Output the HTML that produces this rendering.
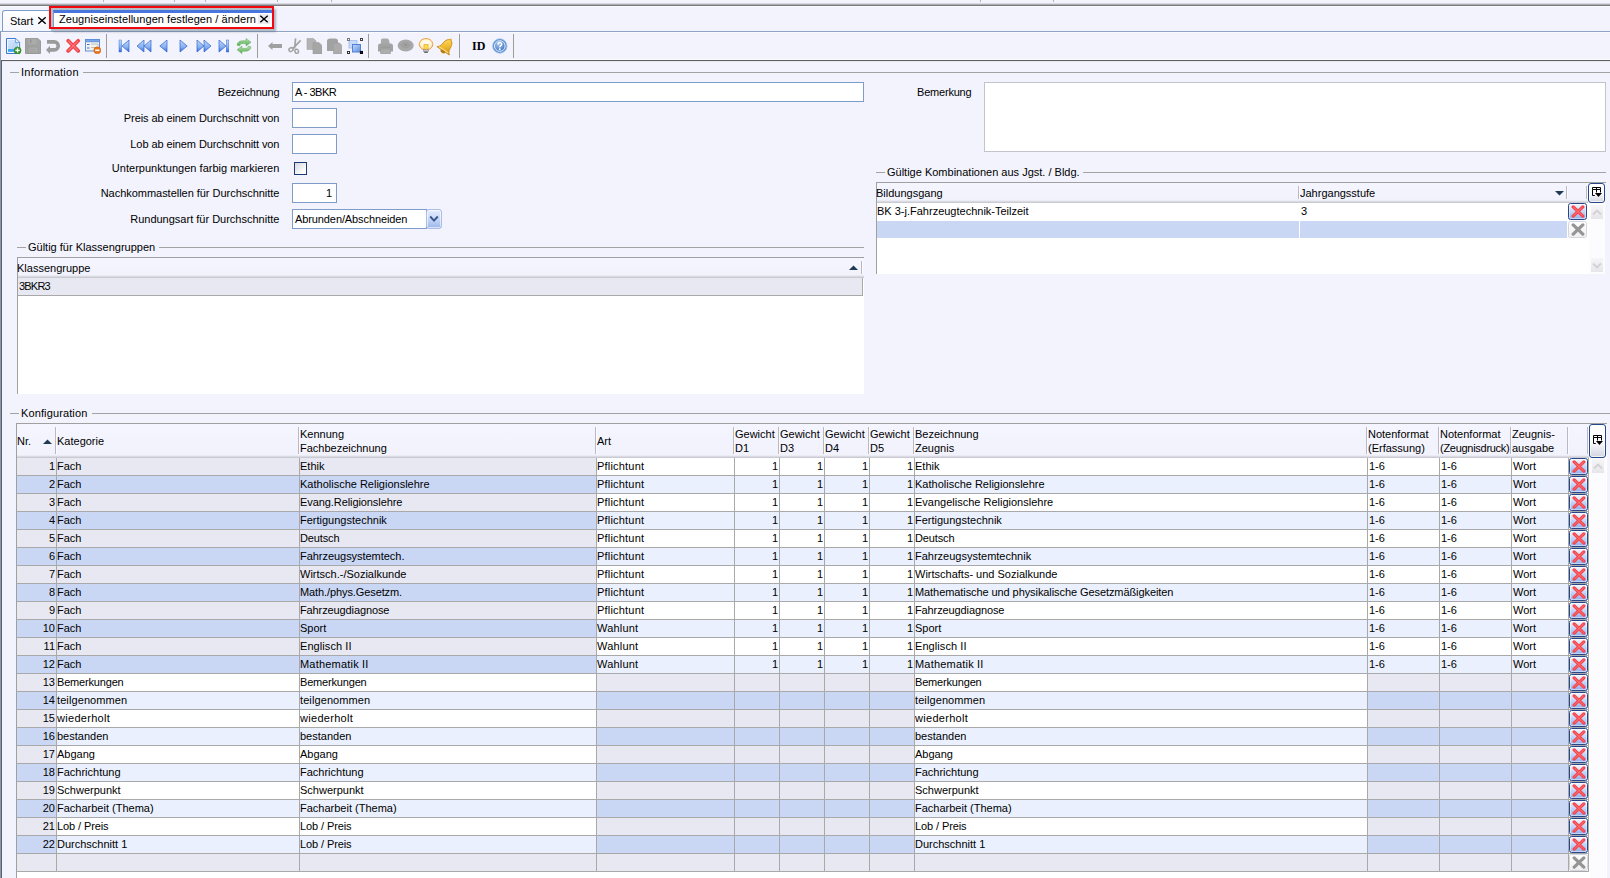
<!DOCTYPE html>
<html lang="de"><head><meta charset="utf-8"><title>Zeugniseinstellungen festlegen / ändern</title>
<style>
*{box-sizing:border-box;margin:0;padding:0}
html,body{width:1610px;height:878px;overflow:hidden;background:#f2f3fd}
body{position:relative;font:11px "Liberation Sans",sans-serif;color:#000;}
.a{position:absolute;white-space:nowrap}
.t{position:absolute;white-space:nowrap;line-height:13px;height:13px}
.r{text-align:right}
.inp{position:absolute;background:#fff;border:1px solid #7f9bc8;height:20px}
.gl{position:absolute;height:1px;background:#a3a3a3}
.cell{position:absolute;height:17px;line-height:17px;white-space:nowrap;overflow:hidden}
.num{text-align:right;padding-right:1px}
.hl{position:absolute;background:#a9a9a9;height:1px}
.vl{position:absolute;background:#a9a9a9;width:1px}
.hs{position:absolute;width:2px;background:linear-gradient(90deg,#b9b9c1 50%,#fbfbff 50%)}
.db{position:absolute;width:19px;height:17px;border:1px solid #27478a;border-radius:2.5px;background:linear-gradient(#f4f7fe 0%,#cfdcf8 40%,#8fb0ee 100%);box-shadow:inset 0 0 0 1px rgba(255,255,255,.45)}
.db.g{border-color:#d4d4dc;background:linear-gradient(#ffffff,#efeff1);box-shadow:none}
.hd{position:absolute;white-space:nowrap;line-height:14px}
.sep{position:absolute;width:1px;background:#9c9c9c;top:34px;height:24px}
.ghead{position:absolute;background:linear-gradient(#f5f5ff,#f2f2fc)}
.gsh{position:absolute;height:3px;background:linear-gradient(#ebebf4 0 33.4%,#dadae3 33.4% 66.7%,#cacad3 66.7%)}
</style></head><body>

<div class="a" style="left:0;top:3px;width:1610px;height:4px;background:linear-gradient(#dad8e6 0 25%,#aeaeb2 25% 50%,#7a7a7a 50% 75%,#fafaff 75%)"></div>
<div class="a" style="left:103px;top:0;width:1px;height:2px;background:#b5b5b5"></div>
<div class="a" style="left:174px;top:0;width:1px;height:2px;background:#b5b5b5"></div>
<div class="a" style="left:205px;top:0;width:1px;height:2px;background:#b5b5b5"></div>
<div class="a" style="left:277px;top:0;width:1px;height:2px;background:#b5b5b5"></div>
<div class="a" style="left:331px;top:0;width:1px;height:2px;background:#b5b5b5"></div>
<div class="a" style="left:980px;top:0;width:1px;height:2px;background:#b5b5b5"></div>
<div class="a" style="left:1053px;top:0;width:1px;height:2px;background:#b5b5b5"></div>
<div class="a" style="left:2px;top:10px;width:50px;height:22px;border:1px solid #7f9bc8;border-bottom:none;border-radius:3px 3px 0 0;background:linear-gradient(#ffffff,#f4f5fe)"></div>
<div class="t" style="left:10px;top:15px">Start</div>
<svg class="a" style="left:37px;top:16px" width="10" height="9" viewBox="0 0 10 9"><path d="M1.3 1.2L8.7 7.8M8.7 1.2L1.3 7.8" stroke="#000" stroke-width="1.45"/></svg>
<div class="a" style="left:0;top:31px;width:1610px;height:1px;background:#8da3c8"></div>
<div class="a" style="left:0;top:32px;width:1610px;height:1px;background:#fbfbff"></div>
<div class="a" style="left:51px;top:8px;width:223px;height:23px;background:#b4bfc6;box-shadow:2px 1px 2px rgba(90,100,120,.45)"></div>
<div class="a" style="left:53px;top:10px;width:219px;height:19px;background:#fff;border-top:3px solid #4876de;border-left:1px solid #7f9bd4"></div>
<div class="t" style="left:59px;top:13px;letter-spacing:0.05px">Zeugniseinstellungen festlegen / ändern</div>
<div class="a" style="left:258px;top:14px;width:12px;height:10px;background:#ececf2"></div>
<svg class="a" style="left:259px;top:15px" width="10" height="8" viewBox="0 0 10 8"><path d="M1.3 0.8L8.7 7.2M8.7 0.8L1.3 7.2" stroke="#000" stroke-width="1.45"/></svg>
<div class="a" style="left:49px;top:6px;width:225px;height:23px;border:2px solid #f0070f"></div>
<div class="a" style="left:0;top:32px;width:1px;height:846px;background:#8797b8"></div>
<div class="a" style="left:1px;top:60px;width:1px;height:818px;background:#5f5f5f"></div>
<div class="a" style="left:1px;top:60px;width:1609px;height:1px;background:#5f5f5f"></div>
<div class="a" style="left:2px;top:61px;width:1608px;height:1px;background:#e6e6f0"></div>
<div class="a" style="left:1px;top:59px;width:1609px;height:1px;background:#fbfbff"></div>
<div class="sep" style="left:106px"></div>
<div class="sep" style="left:257px"></div>
<div class="sep" style="left:368px"></div>
<div class="sep" style="left:459px"></div>
<div class="sep" style="left:513px"></div>
<svg width="0" height="0" style="position:absolute"><defs>
<linearGradient id="gB" x1="0" y1="0" x2="0" y2="1"><stop offset="0" stop-color="#c3daf9"/><stop offset="0.6" stop-color="#86b0ee"/><stop offset="1" stop-color="#2f66da"/></linearGradient>
<linearGradient id="gP" x1="0" y1="0" x2="1" y2="1"><stop offset="0" stop-color="#dbe9fb"/><stop offset="1" stop-color="#a6caf3"/></linearGradient>
<linearGradient id="gG" x1="0" y1="0" x2="0" y2="1"><stop offset="0" stop-color="#b9e3b2"/><stop offset="1" stop-color="#55ab4d"/></linearGradient>
<linearGradient id="gY" x1="0" y1="0" x2="0" y2="1"><stop offset="0" stop-color="#fffbe6"/><stop offset="1" stop-color="#fbe093"/></linearGradient>
<linearGradient id="gO" x1="0" y1="0" x2="1" y2="1"><stop offset="0" stop-color="#fde58a"/><stop offset="0.5" stop-color="#f3bf33"/><stop offset="1" stop-color="#cf8d10"/></linearGradient>
<radialGradient id="gYr" cx="0.5" cy="0.45" r="0.6"><stop offset="0" stop-color="#ffffff"/><stop offset="0.6" stop-color="#fff6d8"/><stop offset="1" stop-color="#fbd78a"/></radialGradient>
<radialGradient id="gH" cx="0.4" cy="0.35" r="0.7"><stop offset="0" stop-color="#a8c6ee"/><stop offset="1" stop-color="#3b73c4"/></radialGradient>
<linearGradient id="gS" x1="0" y1="0" x2="1" y2="1"><stop offset="0" stop-color="#c5d8f8"/><stop offset="1" stop-color="#5f8fe0"/></linearGradient>
</defs></svg>
<svg class="a" style="left:6px;top:38px" width="16" height="16" viewBox="0 0 16 16" ><path d="M0.5 0.5H9.8L13.6 4.3V15.5H0.5Z" fill="url(#gP)" stroke="#3f7ad2"/><path d="M1.5 1.5H9.3L12.6 4.8V14.5H1.5Z" fill="none" stroke="#f4f9ff" stroke-width="0.9"/><path d="M9.6 0.8V4.6H13.3" fill="#eef5fe" stroke="#5a90dc" stroke-width="0.8"/><rect x="2" y="11" width="7" height="2.8" fill="#3fa6f0"/><circle cx="11.6" cy="12.4" r="3.5" fill="#3f9a2f" stroke="#2f7a20" stroke-width="0.5"/><path d="M9.4 12.4H13.8M11.6 10.2V14.6" stroke="#fff" stroke-width="1.3"/></svg>
<svg class="a" style="left:25px;top:38px" width="16" height="16" viewBox="0 0 16 16" ><path d="M0.5 0.5H13L15.5 3V15.5H0.5Z" fill="#a3a3a3" stroke="#9a9a9a"/><rect x="3.5" y="0.8" width="8" height="5.2" fill="#ababab"/><rect x="5.2" y="1.6" width="1.2" height="3" fill="#8c8c8c"/><rect x="3" y="9" width="10" height="6" fill="#b0b0b0" stroke="#959595" stroke-width="0.7"/><path d="M4.5 11.3H11.5M4.5 13.2H11.5" stroke="#9a9a9a" stroke-width="0.8"/></svg>
<svg class="a" style="left:46px;top:38px" width="16" height="16" viewBox="0 0 16 16" ><path d="M1 3.9H8.25A4 4 0 0 1 8.25 11.9H3.5" fill="none" stroke="#9b9b9b" stroke-width="3.6"/><path d="M0 12L4 7.8V16Z" fill="#9b9b9b"/></svg>
<svg class="a" style="left:66px;top:38px" width="16" height="16" viewBox="0 0 16 16" ><path d="M2.2 2.7L12.2 12.9M12.2 2.7L2.2 12.9" stroke="#f0454b" stroke-width="3.7" stroke-linecap="round"/><path d="M2.6 3.1L11.8 12.5M11.8 3.1L2.6 12.5" stroke="#fa7276" stroke-width="1.3" stroke-linecap="round"/></svg>
<svg class="a" style="left:85px;top:38px" width="16" height="16" viewBox="0 0 16 16" ><rect x="0.5" y="1.5" width="14" height="11.5" fill="#f3f3ee" stroke="#5f8fdc"/><rect x="0.5" y="1.5" width="14" height="2.2" fill="#7aa6ea" stroke="#5f8fdc"/><path d="M2 6.5H4.5M2 10H4.5" stroke="#3f6fd0" stroke-width="1.2"/><path d="M6 6H13V8M6 9.5H13" stroke="#b9b9b4" stroke-width="0.9" fill="none"/><circle cx="12.3" cy="12.3" r="3.5" fill="#e8761a" stroke="#c85a0a" stroke-width="0.5"/><rect x="10.2" y="11.5" width="4.2" height="1.6" fill="#fff"/></svg>
<svg class="a" style="left:116px;top:38px" width="16" height="16" viewBox="0 0 16 16" ><rect x="3" y="2" width="2.6" height="12" fill="url(#gB)" stroke="#2a62cf" stroke-width="0.4"/><path d="M13 2V14L6 8Z" fill="url(#gB)" stroke="#2f63d2" stroke-width="0.7"/></svg>
<svg class="a" style="left:136px;top:38px" width="16" height="16" viewBox="0 0 16 16" ><path d="M8 2V14L1 8Z" fill="url(#gB)" stroke="#2f63d2" stroke-width="0.7"/><path d="M15 2V14L8 8Z" fill="url(#gB)" stroke="#2f63d2" stroke-width="0.7"/></svg>
<svg class="a" style="left:156px;top:38px" width="16" height="16" viewBox="0 0 16 16" ><path d="M11 2V14L3.8 8Z" fill="url(#gB)" stroke="#2f63d2" stroke-width="0.7"/></svg>
<svg class="a" style="left:176px;top:38px" width="16" height="16" viewBox="0 0 16 16" ><path d="M4 2V14L11.2 8Z" fill="url(#gB)" stroke="#2f63d2" stroke-width="0.7"/></svg>
<svg class="a" style="left:196px;top:38px" width="16" height="16" viewBox="0 0 16 16" ><path d="M1 2V14L8 8Z" fill="url(#gB)" stroke="#2f63d2" stroke-width="0.7"/><path d="M8 2V14L15 8Z" fill="url(#gB)" stroke="#2f63d2" stroke-width="0.7"/></svg>
<svg class="a" style="left:216px;top:38px" width="16" height="16" viewBox="0 0 16 16" ><rect x="10.2" y="2" width="2.6" height="12" fill="url(#gB)" stroke="#2a62cf" stroke-width="0.4"/><path d="M3 2V14L10 8Z" fill="url(#gB)" stroke="#2f63d2" stroke-width="0.7"/></svg>
<svg class="a" style="left:236px;top:38px" width="16" height="16" viewBox="0 0 16 16" ><path d="M1 7.2C1.3 4 4 2.6 7 2.8H10V0.4L15 4.2L10 8V5.6H7C5 5.5 4 6.2 3.8 7.8Z" fill="url(#gG)" stroke="#5aa854" stroke-width="0.5"/><path d="M15 8.8C14.7 12 12 13.4 9 13.2H6V15.6L1 11.8L6 8V10.4H9C11 10.5 12 9.8 12.2 8.2Z" fill="url(#gG)" stroke="#5aa854" stroke-width="0.5"/></svg>
<svg class="a" style="left:266px;top:38px" width="16" height="16" viewBox="0 0 16 16" ><path d="M2 8L6.5 4V6H16V10H6.5V12Z" fill="#a0a0a0"/></svg>
<svg class="a" style="left:286px;top:38px" width="16" height="16" viewBox="0 0 16 16" ><path d="M9.6 0.3L8.6 10.5M14.6 2.3L6.6 10.8" stroke="#a3a3a3" stroke-width="1.7" fill="none"/><ellipse cx="5" cy="11.6" rx="2.2" ry="1.7" transform="rotate(-35 5 11.6)" fill="none" stroke="#a3a3a3" stroke-width="1.5"/><ellipse cx="10.7" cy="13.3" rx="1.7" ry="2.1" transform="rotate(-20 10.7 13.3)" fill="none" stroke="#a3a3a3" stroke-width="1.5"/></svg>
<svg class="a" style="left:306px;top:38px" width="16" height="16" viewBox="0 0 16 16" ><path d="M1 0.5H7.5L10 3V11.5H1Z" fill="#b2b2b2" stroke="#a4a4a4" stroke-width="0.6"/><path d="M7 4.5H13L16 7.5V16H7Z" fill="#a6a6a6" stroke="#9c9c9c" stroke-width="0.6"/></svg>
<svg class="a" style="left:326px;top:38px" width="16" height="16" viewBox="0 0 16 16" ><path d="M1 3Q1 0.5 4 0.5H9Q12 0.5 12 3V13H1Z" fill="#a2a2a2"/><path d="M7.5 5H13.5L16.5 8V16H7.5Z" fill="#ababab" stroke="#9c9c9c" stroke-width="0.6"/></svg>
<svg class="a" style="left:346px;top:38px" width="17" height="16" viewBox="0 0 17 16" ><rect x="3" y="2.5" width="8" height="7.5" fill="#c9dbfa" stroke="#a9c3f3"/><rect x="6.5" y="6.5" width="8" height="7.5" fill="url(#gS)" stroke="#4f80dc"/><rect x="1.5" y="0.5" width="2" height="2" fill="#fff" stroke="#7a7a7a" stroke-width="1"/><rect x="14.5" y="0.5" width="2" height="2" fill="#fff" stroke="#444" stroke-width="1"/><rect x="1.5" y="13.5" width="2" height="2" fill="#fff" stroke="#333" stroke-width="1"/><rect x="14.5" y="13.5" width="2" height="2" fill="#ddd" stroke="#000" stroke-width="1.2"/></svg>
<svg class="a" style="left:377px;top:38px" width="17" height="16" viewBox="0 0 17 16" ><path d="M4 6V2Q4 0.5 5.5 0.5H10Q11.5 0.5 12 2L12.8 6Z" fill="#a9a9a9"/><path d="M1 8Q1 5.5 3.5 5.5H13.5Q16 5.5 16 8V13.5H1Z" fill="#a3a3a3"/><rect x="3.5" y="11" width="10" height="5" rx="1" fill="#adadad" stroke="#9b9b9b" stroke-width="0.6"/><path d="M3.5 9.2H13.5" stroke="#979797" stroke-width="0.8"/></svg>
<svg class="a" style="left:397px;top:38px" width="18" height="16" viewBox="0 0 18 16" ><ellipse cx="8.7" cy="7.5" rx="8" ry="6" fill="#a8a8a8"/><ellipse cx="8.7" cy="7" rx="5" ry="3.2" fill="#a0a0a0"/><circle cx="8.7" cy="6.8" r="0.9" fill="#8a8a8a"/></svg>
<svg class="a" style="left:418px;top:38px" width="16" height="16" viewBox="0 0 16 16" ><path d="M8 0.6C3.8 0.6 1.3 3.4 1.3 6.4C1.3 8.8 3 10 4.3 11.3H11.7C13 10 14.7 8.8 14.7 6.4C14.7 3.4 12.2 0.6 8 0.6Z" fill="url(#gYr)" stroke="#ee9a3a" stroke-width="1"/><rect x="6" y="6.4" width="4" height="4.8" fill="#fbe04a" stroke="#f3a93a" stroke-width="0.8"/><rect x="5.3" y="11.4" width="5.4" height="2.2" fill="#c4c4c4" stroke="#8a8a8a" stroke-width="0.5"/><rect x="6.2" y="13.6" width="3.6" height="1.3" fill="#5a5a5a"/></svg>
<svg class="a" style="left:438px;top:38px" width="17" height="16" viewBox="0 0 17 16" overflow="visible"><g transform="translate(-1.2 -1) scale(1.17) rotate(34 8 8)"><path d="M8 1.2C5.2 2 4.3 5 4.1 8.2C4 10.2 3 11.4 1.6 12.6H14.4C13 11.4 12 10.2 11.9 8.2C11.7 5 10.8 2 8 1.2Z" fill="url(#gO)" stroke="#c98a14" stroke-width="0.7"/><circle cx="8" cy="1.2" r="1.1" fill="#e9b030"/><ellipse cx="8" cy="13.3" rx="2.2" ry="1.3" fill="#b87a10"/><path d="M3.4 11.6H12.6" stroke="#fbe8a8" stroke-width="0.8"/></g></svg>
<div class="a" style="left:472px;top:39px;font:bold 12px 'Liberation Serif',serif;line-height:14px;letter-spacing:0px">ID</div>
<svg class="a" style="left:492px;top:38px" width="16" height="16" viewBox="0 0 16 16" ><circle cx="7.8" cy="8" r="7.2" fill="#5b8fd6" stroke="#9fc0ec" stroke-width="0.8"/><circle cx="7.8" cy="8" r="5.3" fill="url(#gH)" stroke="#e8f0fb" stroke-width="1"/><path d="M5.9 6.4C5.9 4 9.7 4 9.7 6.3C9.7 7.6 7.8 7.7 7.8 9.3" fill="none" stroke="#fff" stroke-width="1.5"/><circle cx="7.8" cy="11.3" r="0.95" fill="#fff"/></svg>
<div class="gl" style="left:10px;top:72px;width:9px"></div>
<div class="t" style="left:21px;top:66px;letter-spacing:0.25px">Information</div>
<div class="gl" style="left:83px;top:72px;width:1527px"></div>
<div class="t r" style="left:0;width:279.4px;top:86px;letter-spacing:-0.18px">Bezeichnung</div>
<div class="t r" style="left:0;width:279.4px;top:112px;letter-spacing:-0.09px">Preis ab einem Durchschnitt von</div>
<div class="t r" style="left:0;width:279.4px;top:138px;letter-spacing:-0.09px">Lob ab einem Durchschnitt von</div>
<div class="t r" style="left:0;width:279.4px;top:162px;letter-spacing:0.02px">Unterpunktungen farbig markieren</div>
<div class="t r" style="left:0;width:279.4px;top:187px;letter-spacing:-0.03px">Nachkommastellen für Durchschnitte</div>
<div class="t r" style="left:0;width:279.4px;top:213px;letter-spacing:0px">Rundungsart für Durchschnitte</div>
<div class="inp" style="left:292px;top:82px;width:572px"></div><div class="t" style="left:295px;top:86px;letter-spacing:-0.5px">A - 3BKR</div>
<div class="inp" style="left:292px;top:108px;width:45px"></div>
<div class="inp" style="left:292px;top:134px;width:45px"></div>
<div class="a" style="left:294px;top:162px;width:13px;height:13px;border:1px solid #1c3c78;background:linear-gradient(135deg,#d6d6dc,#ffffff 80%)"></div>
<div class="inp" style="left:292px;top:183px;width:45px"></div><div class="t r" style="left:292px;width:40px;top:187px">1</div>
<div class="inp" style="left:292px;top:209px;width:135px"></div><div class="t" style="left:295px;top:213px;letter-spacing:-0.1px">Abrunden/Abschneiden</div>
<div class="a" style="left:426px;top:209px;width:16px;height:20px;border:1px solid #a9bde6;border-radius:3px;background:linear-gradient(#e6edfd,#cbdaf8 45%,#9bb5ea);box-shadow:inset 0 0 0 1px rgba(255,255,255,.6)"></div>
<svg class="a" style="left:429px;top:215px" width="10" height="8" viewBox="0 0 10 8"><path d="M1.2 1.5L5 5.6L8.8 1.5" fill="none" stroke="#3a568f" stroke-width="1.9"/></svg>
<div class="t" style="left:917px;top:86px;letter-spacing:-0.2px">Bemerkung</div>
<div class="a" style="left:984px;top:82px;width:622px;height:70px;background:#fff;border:1px solid #c3c3ce"></div>
<div class="gl" style="left:876px;top:172px;width:9px"></div>
<div class="t" style="left:887px;top:166px">Gültige Kombinationen aus Jgst. / Bldg.</div>
<div class="gl" style="left:1083px;top:172px;width:523px"></div>
<div class="a" style="left:876px;top:182px;width:729px;height:92px;background:#fff;border-left:1px solid #a0a0a0"></div>
<div class="ghead" style="left:876px;top:182px;width:730px;height:18px;border-top:1px solid #a0a0a0;border-left:1px solid #a0a0a0"></div>
<div class="gsh" style="left:877px;top:200px;width:711px"></div>
<div class="t" style="left:876px;top:187px">Bildungsgang</div>
<div class="t" style="left:1300px;top:187px">Jahrgangsstufe</div>
<div class="hs" style="left:1298px;top:186px;height:13px"></div>
<div class="hs" style="left:1566px;top:186px;height:13px"></div>
<div class="hs" style="left:1586px;top:186px;height:13px"></div>
<svg class="a" style="left:1555px;top:191px" width="9" height="5" viewBox="0 0 9 5"><path d="M0 0H9L4.5 4.5Z" fill="#1f3a55"/></svg>
<div class="a" style="left:877px;top:221px;width:690px;height:17px;background:#c9d7f5"></div>
<div class="a" style="left:1299px;top:203px;width:1px;height:35px;background:#fff"></div>
<div class="t" style="left:877px;top:205px">BK 3-j.Fahrzeugtechnik-Teilzeit</div>
<div class="t" style="left:1301px;top:205px">3</div>
<div class="db" style="left:1568px;top:203px"></div><svg class="a" style="left:1571px;top:205px" width="14" height="13" viewBox="0 0 14 13"><path d="M2.2 1.9L11.8 11.1M11.8 1.9L2.2 11.1" stroke="#f5454b" stroke-width="3.3" stroke-linecap="round"/><path d="M2.6 2.3L11.4 10.7M11.4 2.3L2.6 10.7" stroke="#fb7a7f" stroke-width="1" stroke-linecap="round"/></svg>
<div class="db g" style="left:1568px;top:221px"></div><svg class="a" style="left:1571px;top:223px" width="14" height="13" viewBox="0 0 14 13"><path d="M2.2 1.9L11.8 11.1M11.8 1.9L2.2 11.1" stroke="#959595" stroke-width="3.3" stroke-linecap="round"/></svg>
<div class="a" style="left:1588px;top:183px;width:17px;height:20px;border:1px solid #24478a;border-radius:3px;background:linear-gradient(#ffffff 0%,#fafafd 55%,#d2d4e0 100%);box-shadow:inset 0 0 0 1px rgba(255,255,255,.7)"></div>
<svg class="a" style="left:1591px;top:187px" width="12" height="11" viewBox="0 0 12 11"><path d="M1.5 0.5H9.5V2.5H1.5ZM1.5 2.5V8.5H3.8M5.5 0.5V5.5M9.5 2.5V5.5" fill="none" stroke="#000" stroke-width="1"/><path d="M3.9 6H11L7.45 10Z" fill="#000"/></svg>
<div class="a" style="left:1589px;top:204px;width:16px;height:70px;background:#fcfcff"></div>
<div class="a" style="left:1591px;top:205px;width:12px;height:14px;background:linear-gradient(#f6f6f8,#e6e6ea)"></div>
<svg class="a" style="left:1592px;top:209px" width="10" height="7" viewBox="0 0 10 7"><path d="M1 5.5L5 1.5L9 5.5" fill="none" stroke="#d2d2d6" stroke-width="1.8"/></svg>
<div class="a" style="left:1591px;top:258px;width:12px;height:14px;background:linear-gradient(#f6f6f8,#e6e6ea)"></div>
<svg class="a" style="left:1592px;top:262px" width="10" height="7" viewBox="0 0 10 7"><path d="M1 1.5L5 5.5L9 1.5" fill="none" stroke="#d2d2d6" stroke-width="1.8"/></svg>
<div class="gl" style="left:17px;top:247px;width:9px"></div>
<div class="t" style="left:28px;top:241px">Gültig für Klassengruppen</div>
<div class="gl" style="left:159px;top:247px;width:705px"></div>
<div class="a" style="left:17px;top:257px;width:847px;height:137px;background:#fff;border-left:1px solid #a0a0a0"></div>
<div class="ghead" style="left:17px;top:257px;width:847px;height:19px;border-top:1px solid #a0a0a0;border-left:1px solid #a0a0a0"></div>
<div class="gsh" style="left:18px;top:275px;width:846px"></div>
<div class="t" style="left:17px;top:262px">Klassengruppe</div>
<svg class="a" style="left:849px;top:265px" width="9" height="5" viewBox="0 0 9 5"><path d="M0 5H9L4.5 0.5Z" fill="#1f3a55"/></svg>
<div class="a" style="left:18px;top:278px;width:845px;height:18px;background:#e8e8f2;border-bottom:1px solid #a9a9a9;border-right:1px solid #a9a9a9"></div>
<div class="hs" style="left:861px;top:261px;height:13px"></div>
<div class="t" style="left:19px;top:280px;letter-spacing:-0.8px">3BKR3</div>
<div class="gl" style="left:10px;top:413px;width:9px"></div>
<div class="t" style="left:21px;top:407px;letter-spacing:0.12px">Konfiguration</div>
<div class="gl" style="left:92px;top:413px;width:1518px"></div>
<div class="a" style="left:16px;top:423px;width:1591px;height:455px;background:#fff;border-left:1px solid #a0a0a0"></div>
<div class="ghead" style="left:16px;top:423px;width:1591px;height:32px;border-top:1px solid #a0a0a0;border-left:1px solid #a0a0a0"></div>
<div class="gsh" style="left:17px;top:455px;width:1572px"></div>
<div class="hd" style="left:17px;top:434px">Nr.</div>
<div class="hd" style="left:57px;top:434px">Kategorie</div>
<div class="hd" style="left:300px;top:427px">Kennung<br>Fachbezeichnung</div>
<div class="hd" style="left:597px;top:434px">Art</div>
<div class="hd" style="left:735px;top:427px">Gewicht<br>D1</div>
<div class="hd" style="left:780px;top:427px">Gewicht<br>D3</div>
<div class="hd" style="left:825px;top:427px">Gewicht<br>D4</div>
<div class="hd" style="left:870px;top:427px">Gewicht<br>D5</div>
<div class="hd" style="left:915px;top:427px">Bezeichnung<br>Zeugnis</div>
<div class="hd" style="left:1368px;top:427px">Notenformat<br>(Erfassung)</div>
<div class="hd" style="left:1440px;top:427px">Notenformat<br><span style="letter-spacing:-0.28px">(Zeugnisdruck)</span></div>
<div class="hd" style="left:1512px;top:427px">Zeugnis-<br>ausgabe</div>
<div class="hs" style="left:55px;top:427px;height:27px"></div>
<div class="hs" style="left:298px;top:427px;height:27px"></div>
<div class="hs" style="left:595px;top:427px;height:27px"></div>
<div class="hs" style="left:733px;top:427px;height:27px"></div>
<div class="hs" style="left:778px;top:427px;height:27px"></div>
<div class="hs" style="left:823px;top:427px;height:27px"></div>
<div class="hs" style="left:868px;top:427px;height:27px"></div>
<div class="hs" style="left:913px;top:427px;height:27px"></div>
<div class="hs" style="left:1366px;top:427px;height:27px"></div>
<div class="hs" style="left:1438px;top:427px;height:27px"></div>
<div class="hs" style="left:1510px;top:427px;height:27px"></div>
<div class="hs" style="left:1567px;top:427px;height:27px"></div>
<div class="hs" style="left:1587px;top:427px;height:27px"></div>
<svg class="a" style="left:43px;top:439px" width="9" height="5" viewBox="0 0 9 5"><path d="M0 5H9L4.5 0.5Z" fill="#1f3a55"/></svg>
<div class="a" style="left:1589px;top:424px;width:17px;height:34px;border:1px solid #24478a;border-radius:3px;background:linear-gradient(#ffffff 0%,#fafafd 55%,#d2d4e0 100%);box-shadow:inset 0 0 0 1px rgba(255,255,255,.7)"></div>
<svg class="a" style="left:1592px;top:435px" width="12" height="11" viewBox="0 0 12 11"><path d="M1.5 0.5H9.5V2.5H1.5ZM1.5 2.5V8.5H3.8M5.5 0.5V5.5M9.5 2.5V5.5" fill="none" stroke="#000" stroke-width="1"/><path d="M3.9 6H11L7.45 10Z" fill="#000"/></svg>
<div class="a" style="left:1590px;top:458px;width:16px;height:442px;background:#fcfcff"></div>
<div class="a" style="left:1592px;top:459px;width:12px;height:14px;background:linear-gradient(#f6f6f8,#e6e6ea)"></div>
<svg class="a" style="left:1593px;top:463px" width="10" height="7" viewBox="0 0 10 7"><path d="M1 5.5L5 1.5L9 5.5" fill="none" stroke="#d2d2d6" stroke-width="1.8"/></svg>
<div class="a" style="left:1592px;top:884px;width:12px;height:14px;background:linear-gradient(#f6f6f8,#e6e6ea)"></div>
<svg class="a" style="left:1593px;top:888px" width="10" height="7" viewBox="0 0 10 7"><path d="M1 1.5L5 5.5L9 1.5" fill="none" stroke="#d2d2d6" stroke-width="1.8"/></svg>
<div class="cell num" style="left:17px;top:458px;width:39px;background:#e8e8f2">1</div>
<div class="cell" style="left:57px;top:458px;width:242px;background:#e8e8f2">Fach</div>
<div class="cell" style="left:300px;top:458px;width:296px;background:#e8e8f2">Ethik</div>
<div class="cell" style="left:597px;top:458px;width:137px;background:#ffffff;letter-spacing:0.2px">Pflichtunt</div>
<div class="cell num" style="left:735px;top:458px;width:44px;background:#ffffff">1</div>
<div class="cell num" style="left:780px;top:458px;width:44px;background:#ffffff">1</div>
<div class="cell num" style="left:825px;top:458px;width:44px;background:#ffffff">1</div>
<div class="cell num" style="left:870px;top:458px;width:44px;background:#ffffff">1</div>
<div class="cell" style="left:915px;top:458px;width:452px;background:#ffffff">Ethik</div>
<div class="cell" style="left:1368px;top:458px;width:71px;background:#ffffff;padding-left:1px">1-6</div>
<div class="cell" style="left:1440px;top:458px;width:71px;background:#ffffff;padding-left:1px">1-6</div>
<div class="cell" style="left:1512px;top:458px;width:56px;background:#ffffff;padding-left:1px">Wort</div>
<div class="hl" style="left:17px;top:475px;width:1572px"></div>
<div class="db" style="left:1569px;top:458px"></div><svg class="a" style="left:1572px;top:460px" width="14" height="13" viewBox="0 0 14 13"><path d="M2.2 1.9L11.8 11.1M11.8 1.9L2.2 11.1" stroke="#f5454b" stroke-width="3.3" stroke-linecap="round"/><path d="M2.6 2.3L11.4 10.7M11.4 2.3L2.6 10.7" stroke="#fb7a7f" stroke-width="1" stroke-linecap="round"/></svg>
<div class="cell num" style="left:17px;top:476px;width:39px;background:#c9d7f5">2</div>
<div class="cell" style="left:57px;top:476px;width:242px;background:#c9d7f5">Fach</div>
<div class="cell" style="left:300px;top:476px;width:296px;background:#c9d7f5">Katholische Religionslehre</div>
<div class="cell" style="left:597px;top:476px;width:137px;background:#eaf0fd;letter-spacing:0.2px">Pflichtunt</div>
<div class="cell num" style="left:735px;top:476px;width:44px;background:#eaf0fd">1</div>
<div class="cell num" style="left:780px;top:476px;width:44px;background:#eaf0fd">1</div>
<div class="cell num" style="left:825px;top:476px;width:44px;background:#eaf0fd">1</div>
<div class="cell num" style="left:870px;top:476px;width:44px;background:#eaf0fd">1</div>
<div class="cell" style="left:915px;top:476px;width:452px;background:#eaf0fd">Katholische Religionslehre</div>
<div class="cell" style="left:1368px;top:476px;width:71px;background:#eaf0fd;padding-left:1px">1-6</div>
<div class="cell" style="left:1440px;top:476px;width:71px;background:#eaf0fd;padding-left:1px">1-6</div>
<div class="cell" style="left:1512px;top:476px;width:56px;background:#eaf0fd;padding-left:1px">Wort</div>
<div class="hl" style="left:17px;top:493px;width:1572px"></div>
<div class="db" style="left:1569px;top:476px"></div><svg class="a" style="left:1572px;top:478px" width="14" height="13" viewBox="0 0 14 13"><path d="M2.2 1.9L11.8 11.1M11.8 1.9L2.2 11.1" stroke="#f5454b" stroke-width="3.3" stroke-linecap="round"/><path d="M2.6 2.3L11.4 10.7M11.4 2.3L2.6 10.7" stroke="#fb7a7f" stroke-width="1" stroke-linecap="round"/></svg>
<div class="cell num" style="left:17px;top:494px;width:39px;background:#e8e8f2">3</div>
<div class="cell" style="left:57px;top:494px;width:242px;background:#e8e8f2">Fach</div>
<div class="cell" style="left:300px;top:494px;width:296px;background:#e8e8f2;letter-spacing:-0.08px">Evang.Religionslehre</div>
<div class="cell" style="left:597px;top:494px;width:137px;background:#ffffff;letter-spacing:0.2px">Pflichtunt</div>
<div class="cell num" style="left:735px;top:494px;width:44px;background:#ffffff">1</div>
<div class="cell num" style="left:780px;top:494px;width:44px;background:#ffffff">1</div>
<div class="cell num" style="left:825px;top:494px;width:44px;background:#ffffff">1</div>
<div class="cell num" style="left:870px;top:494px;width:44px;background:#ffffff">1</div>
<div class="cell" style="left:915px;top:494px;width:452px;background:#ffffff">Evangelische Religionslehre</div>
<div class="cell" style="left:1368px;top:494px;width:71px;background:#ffffff;padding-left:1px">1-6</div>
<div class="cell" style="left:1440px;top:494px;width:71px;background:#ffffff;padding-left:1px">1-6</div>
<div class="cell" style="left:1512px;top:494px;width:56px;background:#ffffff;padding-left:1px">Wort</div>
<div class="hl" style="left:17px;top:511px;width:1572px"></div>
<div class="db" style="left:1569px;top:494px"></div><svg class="a" style="left:1572px;top:496px" width="14" height="13" viewBox="0 0 14 13"><path d="M2.2 1.9L11.8 11.1M11.8 1.9L2.2 11.1" stroke="#f5454b" stroke-width="3.3" stroke-linecap="round"/><path d="M2.6 2.3L11.4 10.7M11.4 2.3L2.6 10.7" stroke="#fb7a7f" stroke-width="1" stroke-linecap="round"/></svg>
<div class="cell num" style="left:17px;top:512px;width:39px;background:#c9d7f5">4</div>
<div class="cell" style="left:57px;top:512px;width:242px;background:#c9d7f5">Fach</div>
<div class="cell" style="left:300px;top:512px;width:296px;background:#c9d7f5">Fertigungstechnik</div>
<div class="cell" style="left:597px;top:512px;width:137px;background:#eaf0fd;letter-spacing:0.2px">Pflichtunt</div>
<div class="cell num" style="left:735px;top:512px;width:44px;background:#eaf0fd">1</div>
<div class="cell num" style="left:780px;top:512px;width:44px;background:#eaf0fd">1</div>
<div class="cell num" style="left:825px;top:512px;width:44px;background:#eaf0fd">1</div>
<div class="cell num" style="left:870px;top:512px;width:44px;background:#eaf0fd">1</div>
<div class="cell" style="left:915px;top:512px;width:452px;background:#eaf0fd">Fertigungstechnik</div>
<div class="cell" style="left:1368px;top:512px;width:71px;background:#eaf0fd;padding-left:1px">1-6</div>
<div class="cell" style="left:1440px;top:512px;width:71px;background:#eaf0fd;padding-left:1px">1-6</div>
<div class="cell" style="left:1512px;top:512px;width:56px;background:#eaf0fd;padding-left:1px">Wort</div>
<div class="hl" style="left:17px;top:529px;width:1572px"></div>
<div class="db" style="left:1569px;top:512px"></div><svg class="a" style="left:1572px;top:514px" width="14" height="13" viewBox="0 0 14 13"><path d="M2.2 1.9L11.8 11.1M11.8 1.9L2.2 11.1" stroke="#f5454b" stroke-width="3.3" stroke-linecap="round"/><path d="M2.6 2.3L11.4 10.7M11.4 2.3L2.6 10.7" stroke="#fb7a7f" stroke-width="1" stroke-linecap="round"/></svg>
<div class="cell num" style="left:17px;top:530px;width:39px;background:#e8e8f2">5</div>
<div class="cell" style="left:57px;top:530px;width:242px;background:#e8e8f2">Fach</div>
<div class="cell" style="left:300px;top:530px;width:296px;background:#e8e8f2;letter-spacing:-0.14px">Deutsch</div>
<div class="cell" style="left:597px;top:530px;width:137px;background:#ffffff;letter-spacing:0.2px">Pflichtunt</div>
<div class="cell num" style="left:735px;top:530px;width:44px;background:#ffffff">1</div>
<div class="cell num" style="left:780px;top:530px;width:44px;background:#ffffff">1</div>
<div class="cell num" style="left:825px;top:530px;width:44px;background:#ffffff">1</div>
<div class="cell num" style="left:870px;top:530px;width:44px;background:#ffffff">1</div>
<div class="cell" style="left:915px;top:530px;width:452px;background:#ffffff;letter-spacing:-0.14px">Deutsch</div>
<div class="cell" style="left:1368px;top:530px;width:71px;background:#ffffff;padding-left:1px">1-6</div>
<div class="cell" style="left:1440px;top:530px;width:71px;background:#ffffff;padding-left:1px">1-6</div>
<div class="cell" style="left:1512px;top:530px;width:56px;background:#ffffff;padding-left:1px">Wort</div>
<div class="hl" style="left:17px;top:547px;width:1572px"></div>
<div class="db" style="left:1569px;top:530px"></div><svg class="a" style="left:1572px;top:532px" width="14" height="13" viewBox="0 0 14 13"><path d="M2.2 1.9L11.8 11.1M11.8 1.9L2.2 11.1" stroke="#f5454b" stroke-width="3.3" stroke-linecap="round"/><path d="M2.6 2.3L11.4 10.7M11.4 2.3L2.6 10.7" stroke="#fb7a7f" stroke-width="1" stroke-linecap="round"/></svg>
<div class="cell num" style="left:17px;top:548px;width:39px;background:#c9d7f5">6</div>
<div class="cell" style="left:57px;top:548px;width:242px;background:#c9d7f5">Fach</div>
<div class="cell" style="left:300px;top:548px;width:296px;background:#c9d7f5;letter-spacing:-0.04px">Fahrzeugsystemtech.</div>
<div class="cell" style="left:597px;top:548px;width:137px;background:#eaf0fd;letter-spacing:0.2px">Pflichtunt</div>
<div class="cell num" style="left:735px;top:548px;width:44px;background:#eaf0fd">1</div>
<div class="cell num" style="left:780px;top:548px;width:44px;background:#eaf0fd">1</div>
<div class="cell num" style="left:825px;top:548px;width:44px;background:#eaf0fd">1</div>
<div class="cell num" style="left:870px;top:548px;width:44px;background:#eaf0fd">1</div>
<div class="cell" style="left:915px;top:548px;width:452px;background:#eaf0fd">Fahrzeugsystemtechnik</div>
<div class="cell" style="left:1368px;top:548px;width:71px;background:#eaf0fd;padding-left:1px">1-6</div>
<div class="cell" style="left:1440px;top:548px;width:71px;background:#eaf0fd;padding-left:1px">1-6</div>
<div class="cell" style="left:1512px;top:548px;width:56px;background:#eaf0fd;padding-left:1px">Wort</div>
<div class="hl" style="left:17px;top:565px;width:1572px"></div>
<div class="db" style="left:1569px;top:548px"></div><svg class="a" style="left:1572px;top:550px" width="14" height="13" viewBox="0 0 14 13"><path d="M2.2 1.9L11.8 11.1M11.8 1.9L2.2 11.1" stroke="#f5454b" stroke-width="3.3" stroke-linecap="round"/><path d="M2.6 2.3L11.4 10.7M11.4 2.3L2.6 10.7" stroke="#fb7a7f" stroke-width="1" stroke-linecap="round"/></svg>
<div class="cell num" style="left:17px;top:566px;width:39px;background:#e8e8f2">7</div>
<div class="cell" style="left:57px;top:566px;width:242px;background:#e8e8f2">Fach</div>
<div class="cell" style="left:300px;top:566px;width:296px;background:#e8e8f2">Wirtsch.-/Sozialkunde</div>
<div class="cell" style="left:597px;top:566px;width:137px;background:#ffffff;letter-spacing:0.2px">Pflichtunt</div>
<div class="cell num" style="left:735px;top:566px;width:44px;background:#ffffff">1</div>
<div class="cell num" style="left:780px;top:566px;width:44px;background:#ffffff">1</div>
<div class="cell num" style="left:825px;top:566px;width:44px;background:#ffffff">1</div>
<div class="cell num" style="left:870px;top:566px;width:44px;background:#ffffff">1</div>
<div class="cell" style="left:915px;top:566px;width:452px;background:#ffffff">Wirtschafts- und Sozialkunde</div>
<div class="cell" style="left:1368px;top:566px;width:71px;background:#ffffff;padding-left:1px">1-6</div>
<div class="cell" style="left:1440px;top:566px;width:71px;background:#ffffff;padding-left:1px">1-6</div>
<div class="cell" style="left:1512px;top:566px;width:56px;background:#ffffff;padding-left:1px">Wort</div>
<div class="hl" style="left:17px;top:583px;width:1572px"></div>
<div class="db" style="left:1569px;top:566px"></div><svg class="a" style="left:1572px;top:568px" width="14" height="13" viewBox="0 0 14 13"><path d="M2.2 1.9L11.8 11.1M11.8 1.9L2.2 11.1" stroke="#f5454b" stroke-width="3.3" stroke-linecap="round"/><path d="M2.6 2.3L11.4 10.7M11.4 2.3L2.6 10.7" stroke="#fb7a7f" stroke-width="1" stroke-linecap="round"/></svg>
<div class="cell num" style="left:17px;top:584px;width:39px;background:#c9d7f5">8</div>
<div class="cell" style="left:57px;top:584px;width:242px;background:#c9d7f5">Fach</div>
<div class="cell" style="left:300px;top:584px;width:296px;background:#c9d7f5;letter-spacing:-0.1px">Math./phys.Gesetzm.</div>
<div class="cell" style="left:597px;top:584px;width:137px;background:#eaf0fd;letter-spacing:0.2px">Pflichtunt</div>
<div class="cell num" style="left:735px;top:584px;width:44px;background:#eaf0fd">1</div>
<div class="cell num" style="left:780px;top:584px;width:44px;background:#eaf0fd">1</div>
<div class="cell num" style="left:825px;top:584px;width:44px;background:#eaf0fd">1</div>
<div class="cell num" style="left:870px;top:584px;width:44px;background:#eaf0fd">1</div>
<div class="cell" style="left:915px;top:584px;width:452px;background:#eaf0fd;letter-spacing:-0.08px">Mathematische und physikalische Gesetzmäßigkeiten</div>
<div class="cell" style="left:1368px;top:584px;width:71px;background:#eaf0fd;padding-left:1px">1-6</div>
<div class="cell" style="left:1440px;top:584px;width:71px;background:#eaf0fd;padding-left:1px">1-6</div>
<div class="cell" style="left:1512px;top:584px;width:56px;background:#eaf0fd;padding-left:1px">Wort</div>
<div class="hl" style="left:17px;top:601px;width:1572px"></div>
<div class="db" style="left:1569px;top:584px"></div><svg class="a" style="left:1572px;top:586px" width="14" height="13" viewBox="0 0 14 13"><path d="M2.2 1.9L11.8 11.1M11.8 1.9L2.2 11.1" stroke="#f5454b" stroke-width="3.3" stroke-linecap="round"/><path d="M2.6 2.3L11.4 10.7M11.4 2.3L2.6 10.7" stroke="#fb7a7f" stroke-width="1" stroke-linecap="round"/></svg>
<div class="cell num" style="left:17px;top:602px;width:39px;background:#e8e8f2">9</div>
<div class="cell" style="left:57px;top:602px;width:242px;background:#e8e8f2">Fach</div>
<div class="cell" style="left:300px;top:602px;width:296px;background:#e8e8f2;letter-spacing:-0.11px">Fahrzeugdiagnose</div>
<div class="cell" style="left:597px;top:602px;width:137px;background:#ffffff;letter-spacing:0.2px">Pflichtunt</div>
<div class="cell num" style="left:735px;top:602px;width:44px;background:#ffffff">1</div>
<div class="cell num" style="left:780px;top:602px;width:44px;background:#ffffff">1</div>
<div class="cell num" style="left:825px;top:602px;width:44px;background:#ffffff">1</div>
<div class="cell num" style="left:870px;top:602px;width:44px;background:#ffffff">1</div>
<div class="cell" style="left:915px;top:602px;width:452px;background:#ffffff;letter-spacing:-0.11px">Fahrzeugdiagnose</div>
<div class="cell" style="left:1368px;top:602px;width:71px;background:#ffffff;padding-left:1px">1-6</div>
<div class="cell" style="left:1440px;top:602px;width:71px;background:#ffffff;padding-left:1px">1-6</div>
<div class="cell" style="left:1512px;top:602px;width:56px;background:#ffffff;padding-left:1px">Wort</div>
<div class="hl" style="left:17px;top:619px;width:1572px"></div>
<div class="db" style="left:1569px;top:602px"></div><svg class="a" style="left:1572px;top:604px" width="14" height="13" viewBox="0 0 14 13"><path d="M2.2 1.9L11.8 11.1M11.8 1.9L2.2 11.1" stroke="#f5454b" stroke-width="3.3" stroke-linecap="round"/><path d="M2.6 2.3L11.4 10.7M11.4 2.3L2.6 10.7" stroke="#fb7a7f" stroke-width="1" stroke-linecap="round"/></svg>
<div class="cell num" style="left:17px;top:620px;width:39px;background:#c9d7f5">10</div>
<div class="cell" style="left:57px;top:620px;width:242px;background:#c9d7f5">Fach</div>
<div class="cell" style="left:300px;top:620px;width:296px;background:#c9d7f5">Sport</div>
<div class="cell" style="left:597px;top:620px;width:137px;background:#eaf0fd;letter-spacing:0.2px">Wahlunt</div>
<div class="cell num" style="left:735px;top:620px;width:44px;background:#eaf0fd">1</div>
<div class="cell num" style="left:780px;top:620px;width:44px;background:#eaf0fd">1</div>
<div class="cell num" style="left:825px;top:620px;width:44px;background:#eaf0fd">1</div>
<div class="cell num" style="left:870px;top:620px;width:44px;background:#eaf0fd">1</div>
<div class="cell" style="left:915px;top:620px;width:452px;background:#eaf0fd">Sport</div>
<div class="cell" style="left:1368px;top:620px;width:71px;background:#eaf0fd;padding-left:1px">1-6</div>
<div class="cell" style="left:1440px;top:620px;width:71px;background:#eaf0fd;padding-left:1px">1-6</div>
<div class="cell" style="left:1512px;top:620px;width:56px;background:#eaf0fd;padding-left:1px">Wort</div>
<div class="hl" style="left:17px;top:637px;width:1572px"></div>
<div class="db" style="left:1569px;top:620px"></div><svg class="a" style="left:1572px;top:622px" width="14" height="13" viewBox="0 0 14 13"><path d="M2.2 1.9L11.8 11.1M11.8 1.9L2.2 11.1" stroke="#f5454b" stroke-width="3.3" stroke-linecap="round"/><path d="M2.6 2.3L11.4 10.7M11.4 2.3L2.6 10.7" stroke="#fb7a7f" stroke-width="1" stroke-linecap="round"/></svg>
<div class="cell num" style="left:17px;top:638px;width:39px;background:#e8e8f2">11</div>
<div class="cell" style="left:57px;top:638px;width:242px;background:#e8e8f2">Fach</div>
<div class="cell" style="left:300px;top:638px;width:296px;background:#e8e8f2;letter-spacing:0.07px">Englisch II</div>
<div class="cell" style="left:597px;top:638px;width:137px;background:#ffffff;letter-spacing:0.2px">Wahlunt</div>
<div class="cell num" style="left:735px;top:638px;width:44px;background:#ffffff">1</div>
<div class="cell num" style="left:780px;top:638px;width:44px;background:#ffffff">1</div>
<div class="cell num" style="left:825px;top:638px;width:44px;background:#ffffff">1</div>
<div class="cell num" style="left:870px;top:638px;width:44px;background:#ffffff">1</div>
<div class="cell" style="left:915px;top:638px;width:452px;background:#ffffff;letter-spacing:0.07px">Englisch II</div>
<div class="cell" style="left:1368px;top:638px;width:71px;background:#ffffff;padding-left:1px">1-6</div>
<div class="cell" style="left:1440px;top:638px;width:71px;background:#ffffff;padding-left:1px">1-6</div>
<div class="cell" style="left:1512px;top:638px;width:56px;background:#ffffff;padding-left:1px">Wort</div>
<div class="hl" style="left:17px;top:655px;width:1572px"></div>
<div class="db" style="left:1569px;top:638px"></div><svg class="a" style="left:1572px;top:640px" width="14" height="13" viewBox="0 0 14 13"><path d="M2.2 1.9L11.8 11.1M11.8 1.9L2.2 11.1" stroke="#f5454b" stroke-width="3.3" stroke-linecap="round"/><path d="M2.6 2.3L11.4 10.7M11.4 2.3L2.6 10.7" stroke="#fb7a7f" stroke-width="1" stroke-linecap="round"/></svg>
<div class="cell num" style="left:17px;top:656px;width:39px;background:#c9d7f5">12</div>
<div class="cell" style="left:57px;top:656px;width:242px;background:#c9d7f5">Fach</div>
<div class="cell" style="left:300px;top:656px;width:296px;background:#c9d7f5;letter-spacing:0.2px">Mathematik II</div>
<div class="cell" style="left:597px;top:656px;width:137px;background:#eaf0fd;letter-spacing:0.2px">Wahlunt</div>
<div class="cell num" style="left:735px;top:656px;width:44px;background:#eaf0fd">1</div>
<div class="cell num" style="left:780px;top:656px;width:44px;background:#eaf0fd">1</div>
<div class="cell num" style="left:825px;top:656px;width:44px;background:#eaf0fd">1</div>
<div class="cell num" style="left:870px;top:656px;width:44px;background:#eaf0fd">1</div>
<div class="cell" style="left:915px;top:656px;width:452px;background:#eaf0fd;letter-spacing:0.2px">Mathematik II</div>
<div class="cell" style="left:1368px;top:656px;width:71px;background:#eaf0fd;padding-left:1px">1-6</div>
<div class="cell" style="left:1440px;top:656px;width:71px;background:#eaf0fd;padding-left:1px">1-6</div>
<div class="cell" style="left:1512px;top:656px;width:56px;background:#eaf0fd;padding-left:1px">Wort</div>
<div class="hl" style="left:17px;top:673px;width:1572px"></div>
<div class="db" style="left:1569px;top:656px"></div><svg class="a" style="left:1572px;top:658px" width="14" height="13" viewBox="0 0 14 13"><path d="M2.2 1.9L11.8 11.1M11.8 1.9L2.2 11.1" stroke="#f5454b" stroke-width="3.3" stroke-linecap="round"/><path d="M2.6 2.3L11.4 10.7M11.4 2.3L2.6 10.7" stroke="#fb7a7f" stroke-width="1" stroke-linecap="round"/></svg>
<div class="cell num" style="left:17px;top:674px;width:39px;background:#e8e8f2">13</div>
<div class="cell" style="left:57px;top:674px;width:242px;background:#ffffff;letter-spacing:-0.18px">Bemerkungen</div>
<div class="cell" style="left:300px;top:674px;width:296px;background:#ffffff;letter-spacing:-0.18px">Bemerkungen</div>
<div class="cell" style="left:597px;top:674px;width:137px;background:#e8e8f2;letter-spacing:0.2px"></div>
<div class="cell" style="left:735px;top:674px;width:44px;background:#e8e8f2"></div>
<div class="cell" style="left:780px;top:674px;width:44px;background:#e8e8f2"></div>
<div class="cell" style="left:825px;top:674px;width:44px;background:#e8e8f2"></div>
<div class="cell" style="left:870px;top:674px;width:44px;background:#e8e8f2"></div>
<div class="cell" style="left:915px;top:674px;width:452px;background:#ffffff;letter-spacing:-0.18px">Bemerkungen</div>
<div class="cell" style="left:1368px;top:674px;width:71px;background:#e8e8f2;padding-left:1px"></div>
<div class="cell" style="left:1440px;top:674px;width:71px;background:#e8e8f2;padding-left:1px"></div>
<div class="cell" style="left:1512px;top:674px;width:56px;background:#e8e8f2;padding-left:1px"></div>
<div class="hl" style="left:17px;top:691px;width:1572px"></div>
<div class="db" style="left:1569px;top:674px"></div><svg class="a" style="left:1572px;top:676px" width="14" height="13" viewBox="0 0 14 13"><path d="M2.2 1.9L11.8 11.1M11.8 1.9L2.2 11.1" stroke="#f5454b" stroke-width="3.3" stroke-linecap="round"/><path d="M2.6 2.3L11.4 10.7M11.4 2.3L2.6 10.7" stroke="#fb7a7f" stroke-width="1" stroke-linecap="round"/></svg>
<div class="cell num" style="left:17px;top:692px;width:39px;background:#c9d7f5">14</div>
<div class="cell" style="left:57px;top:692px;width:242px;background:#eaf0fd;letter-spacing:0.1px">teilgenommen</div>
<div class="cell" style="left:300px;top:692px;width:296px;background:#eaf0fd;letter-spacing:0.1px">teilgenommen</div>
<div class="cell" style="left:597px;top:692px;width:137px;background:#c9d7f5;letter-spacing:0.2px"></div>
<div class="cell" style="left:735px;top:692px;width:44px;background:#c9d7f5"></div>
<div class="cell" style="left:780px;top:692px;width:44px;background:#c9d7f5"></div>
<div class="cell" style="left:825px;top:692px;width:44px;background:#c9d7f5"></div>
<div class="cell" style="left:870px;top:692px;width:44px;background:#c9d7f5"></div>
<div class="cell" style="left:915px;top:692px;width:452px;background:#eaf0fd;letter-spacing:0.1px">teilgenommen</div>
<div class="cell" style="left:1368px;top:692px;width:71px;background:#c9d7f5;padding-left:1px"></div>
<div class="cell" style="left:1440px;top:692px;width:71px;background:#c9d7f5;padding-left:1px"></div>
<div class="cell" style="left:1512px;top:692px;width:56px;background:#c9d7f5;padding-left:1px"></div>
<div class="hl" style="left:17px;top:709px;width:1572px"></div>
<div class="db" style="left:1569px;top:692px"></div><svg class="a" style="left:1572px;top:694px" width="14" height="13" viewBox="0 0 14 13"><path d="M2.2 1.9L11.8 11.1M11.8 1.9L2.2 11.1" stroke="#f5454b" stroke-width="3.3" stroke-linecap="round"/><path d="M2.6 2.3L11.4 10.7M11.4 2.3L2.6 10.7" stroke="#fb7a7f" stroke-width="1" stroke-linecap="round"/></svg>
<div class="cell num" style="left:17px;top:710px;width:39px;background:#e8e8f2">15</div>
<div class="cell" style="left:57px;top:710px;width:242px;background:#ffffff;letter-spacing:0.3px">wiederholt</div>
<div class="cell" style="left:300px;top:710px;width:296px;background:#ffffff;letter-spacing:0.3px">wiederholt</div>
<div class="cell" style="left:597px;top:710px;width:137px;background:#e8e8f2;letter-spacing:0.2px"></div>
<div class="cell" style="left:735px;top:710px;width:44px;background:#e8e8f2"></div>
<div class="cell" style="left:780px;top:710px;width:44px;background:#e8e8f2"></div>
<div class="cell" style="left:825px;top:710px;width:44px;background:#e8e8f2"></div>
<div class="cell" style="left:870px;top:710px;width:44px;background:#e8e8f2"></div>
<div class="cell" style="left:915px;top:710px;width:452px;background:#ffffff;letter-spacing:0.3px">wiederholt</div>
<div class="cell" style="left:1368px;top:710px;width:71px;background:#e8e8f2;padding-left:1px"></div>
<div class="cell" style="left:1440px;top:710px;width:71px;background:#e8e8f2;padding-left:1px"></div>
<div class="cell" style="left:1512px;top:710px;width:56px;background:#e8e8f2;padding-left:1px"></div>
<div class="hl" style="left:17px;top:727px;width:1572px"></div>
<div class="db" style="left:1569px;top:710px"></div><svg class="a" style="left:1572px;top:712px" width="14" height="13" viewBox="0 0 14 13"><path d="M2.2 1.9L11.8 11.1M11.8 1.9L2.2 11.1" stroke="#f5454b" stroke-width="3.3" stroke-linecap="round"/><path d="M2.6 2.3L11.4 10.7M11.4 2.3L2.6 10.7" stroke="#fb7a7f" stroke-width="1" stroke-linecap="round"/></svg>
<div class="cell num" style="left:17px;top:728px;width:39px;background:#c9d7f5">16</div>
<div class="cell" style="left:57px;top:728px;width:242px;background:#eaf0fd">bestanden</div>
<div class="cell" style="left:300px;top:728px;width:296px;background:#eaf0fd">bestanden</div>
<div class="cell" style="left:597px;top:728px;width:137px;background:#c9d7f5;letter-spacing:0.2px"></div>
<div class="cell" style="left:735px;top:728px;width:44px;background:#c9d7f5"></div>
<div class="cell" style="left:780px;top:728px;width:44px;background:#c9d7f5"></div>
<div class="cell" style="left:825px;top:728px;width:44px;background:#c9d7f5"></div>
<div class="cell" style="left:870px;top:728px;width:44px;background:#c9d7f5"></div>
<div class="cell" style="left:915px;top:728px;width:452px;background:#eaf0fd">bestanden</div>
<div class="cell" style="left:1368px;top:728px;width:71px;background:#c9d7f5;padding-left:1px"></div>
<div class="cell" style="left:1440px;top:728px;width:71px;background:#c9d7f5;padding-left:1px"></div>
<div class="cell" style="left:1512px;top:728px;width:56px;background:#c9d7f5;padding-left:1px"></div>
<div class="hl" style="left:17px;top:745px;width:1572px"></div>
<div class="db" style="left:1569px;top:728px"></div><svg class="a" style="left:1572px;top:730px" width="14" height="13" viewBox="0 0 14 13"><path d="M2.2 1.9L11.8 11.1M11.8 1.9L2.2 11.1" stroke="#f5454b" stroke-width="3.3" stroke-linecap="round"/><path d="M2.6 2.3L11.4 10.7M11.4 2.3L2.6 10.7" stroke="#fb7a7f" stroke-width="1" stroke-linecap="round"/></svg>
<div class="cell num" style="left:17px;top:746px;width:39px;background:#e8e8f2">17</div>
<div class="cell" style="left:57px;top:746px;width:242px;background:#ffffff">Abgang</div>
<div class="cell" style="left:300px;top:746px;width:296px;background:#ffffff">Abgang</div>
<div class="cell" style="left:597px;top:746px;width:137px;background:#e8e8f2;letter-spacing:0.2px"></div>
<div class="cell" style="left:735px;top:746px;width:44px;background:#e8e8f2"></div>
<div class="cell" style="left:780px;top:746px;width:44px;background:#e8e8f2"></div>
<div class="cell" style="left:825px;top:746px;width:44px;background:#e8e8f2"></div>
<div class="cell" style="left:870px;top:746px;width:44px;background:#e8e8f2"></div>
<div class="cell" style="left:915px;top:746px;width:452px;background:#ffffff">Abgang</div>
<div class="cell" style="left:1368px;top:746px;width:71px;background:#e8e8f2;padding-left:1px"></div>
<div class="cell" style="left:1440px;top:746px;width:71px;background:#e8e8f2;padding-left:1px"></div>
<div class="cell" style="left:1512px;top:746px;width:56px;background:#e8e8f2;padding-left:1px"></div>
<div class="hl" style="left:17px;top:763px;width:1572px"></div>
<div class="db" style="left:1569px;top:746px"></div><svg class="a" style="left:1572px;top:748px" width="14" height="13" viewBox="0 0 14 13"><path d="M2.2 1.9L11.8 11.1M11.8 1.9L2.2 11.1" stroke="#f5454b" stroke-width="3.3" stroke-linecap="round"/><path d="M2.6 2.3L11.4 10.7M11.4 2.3L2.6 10.7" stroke="#fb7a7f" stroke-width="1" stroke-linecap="round"/></svg>
<div class="cell num" style="left:17px;top:764px;width:39px;background:#c9d7f5">18</div>
<div class="cell" style="left:57px;top:764px;width:242px;background:#eaf0fd">Fachrichtung</div>
<div class="cell" style="left:300px;top:764px;width:296px;background:#eaf0fd">Fachrichtung</div>
<div class="cell" style="left:597px;top:764px;width:137px;background:#c9d7f5;letter-spacing:0.2px"></div>
<div class="cell" style="left:735px;top:764px;width:44px;background:#c9d7f5"></div>
<div class="cell" style="left:780px;top:764px;width:44px;background:#c9d7f5"></div>
<div class="cell" style="left:825px;top:764px;width:44px;background:#c9d7f5"></div>
<div class="cell" style="left:870px;top:764px;width:44px;background:#c9d7f5"></div>
<div class="cell" style="left:915px;top:764px;width:452px;background:#eaf0fd">Fachrichtung</div>
<div class="cell" style="left:1368px;top:764px;width:71px;background:#c9d7f5;padding-left:1px"></div>
<div class="cell" style="left:1440px;top:764px;width:71px;background:#c9d7f5;padding-left:1px"></div>
<div class="cell" style="left:1512px;top:764px;width:56px;background:#c9d7f5;padding-left:1px"></div>
<div class="hl" style="left:17px;top:781px;width:1572px"></div>
<div class="db" style="left:1569px;top:764px"></div><svg class="a" style="left:1572px;top:766px" width="14" height="13" viewBox="0 0 14 13"><path d="M2.2 1.9L11.8 11.1M11.8 1.9L2.2 11.1" stroke="#f5454b" stroke-width="3.3" stroke-linecap="round"/><path d="M2.6 2.3L11.4 10.7M11.4 2.3L2.6 10.7" stroke="#fb7a7f" stroke-width="1" stroke-linecap="round"/></svg>
<div class="cell num" style="left:17px;top:782px;width:39px;background:#e8e8f2">19</div>
<div class="cell" style="left:57px;top:782px;width:242px;background:#ffffff">Schwerpunkt</div>
<div class="cell" style="left:300px;top:782px;width:296px;background:#ffffff">Schwerpunkt</div>
<div class="cell" style="left:597px;top:782px;width:137px;background:#e8e8f2;letter-spacing:0.2px"></div>
<div class="cell" style="left:735px;top:782px;width:44px;background:#e8e8f2"></div>
<div class="cell" style="left:780px;top:782px;width:44px;background:#e8e8f2"></div>
<div class="cell" style="left:825px;top:782px;width:44px;background:#e8e8f2"></div>
<div class="cell" style="left:870px;top:782px;width:44px;background:#e8e8f2"></div>
<div class="cell" style="left:915px;top:782px;width:452px;background:#ffffff">Schwerpunkt</div>
<div class="cell" style="left:1368px;top:782px;width:71px;background:#e8e8f2;padding-left:1px"></div>
<div class="cell" style="left:1440px;top:782px;width:71px;background:#e8e8f2;padding-left:1px"></div>
<div class="cell" style="left:1512px;top:782px;width:56px;background:#e8e8f2;padding-left:1px"></div>
<div class="hl" style="left:17px;top:799px;width:1572px"></div>
<div class="db" style="left:1569px;top:782px"></div><svg class="a" style="left:1572px;top:784px" width="14" height="13" viewBox="0 0 14 13"><path d="M2.2 1.9L11.8 11.1M11.8 1.9L2.2 11.1" stroke="#f5454b" stroke-width="3.3" stroke-linecap="round"/><path d="M2.6 2.3L11.4 10.7M11.4 2.3L2.6 10.7" stroke="#fb7a7f" stroke-width="1" stroke-linecap="round"/></svg>
<div class="cell num" style="left:17px;top:800px;width:39px;background:#c9d7f5">20</div>
<div class="cell" style="left:57px;top:800px;width:242px;background:#eaf0fd">Facharbeit (Thema)</div>
<div class="cell" style="left:300px;top:800px;width:296px;background:#eaf0fd">Facharbeit (Thema)</div>
<div class="cell" style="left:597px;top:800px;width:137px;background:#c9d7f5;letter-spacing:0.2px"></div>
<div class="cell" style="left:735px;top:800px;width:44px;background:#c9d7f5"></div>
<div class="cell" style="left:780px;top:800px;width:44px;background:#c9d7f5"></div>
<div class="cell" style="left:825px;top:800px;width:44px;background:#c9d7f5"></div>
<div class="cell" style="left:870px;top:800px;width:44px;background:#c9d7f5"></div>
<div class="cell" style="left:915px;top:800px;width:452px;background:#eaf0fd">Facharbeit (Thema)</div>
<div class="cell" style="left:1368px;top:800px;width:71px;background:#c9d7f5;padding-left:1px"></div>
<div class="cell" style="left:1440px;top:800px;width:71px;background:#c9d7f5;padding-left:1px"></div>
<div class="cell" style="left:1512px;top:800px;width:56px;background:#c9d7f5;padding-left:1px"></div>
<div class="hl" style="left:17px;top:817px;width:1572px"></div>
<div class="db" style="left:1569px;top:800px"></div><svg class="a" style="left:1572px;top:802px" width="14" height="13" viewBox="0 0 14 13"><path d="M2.2 1.9L11.8 11.1M11.8 1.9L2.2 11.1" stroke="#f5454b" stroke-width="3.3" stroke-linecap="round"/><path d="M2.6 2.3L11.4 10.7M11.4 2.3L2.6 10.7" stroke="#fb7a7f" stroke-width="1" stroke-linecap="round"/></svg>
<div class="cell num" style="left:17px;top:818px;width:39px;background:#e8e8f2">21</div>
<div class="cell" style="left:57px;top:818px;width:242px;background:#ffffff;letter-spacing:-0.1px">Lob / Preis</div>
<div class="cell" style="left:300px;top:818px;width:296px;background:#ffffff;letter-spacing:-0.1px">Lob / Preis</div>
<div class="cell" style="left:597px;top:818px;width:137px;background:#e8e8f2;letter-spacing:0.2px"></div>
<div class="cell" style="left:735px;top:818px;width:44px;background:#e8e8f2"></div>
<div class="cell" style="left:780px;top:818px;width:44px;background:#e8e8f2"></div>
<div class="cell" style="left:825px;top:818px;width:44px;background:#e8e8f2"></div>
<div class="cell" style="left:870px;top:818px;width:44px;background:#e8e8f2"></div>
<div class="cell" style="left:915px;top:818px;width:452px;background:#ffffff;letter-spacing:-0.1px">Lob / Preis</div>
<div class="cell" style="left:1368px;top:818px;width:71px;background:#e8e8f2;padding-left:1px"></div>
<div class="cell" style="left:1440px;top:818px;width:71px;background:#e8e8f2;padding-left:1px"></div>
<div class="cell" style="left:1512px;top:818px;width:56px;background:#e8e8f2;padding-left:1px"></div>
<div class="hl" style="left:17px;top:835px;width:1572px"></div>
<div class="db" style="left:1569px;top:818px"></div><svg class="a" style="left:1572px;top:820px" width="14" height="13" viewBox="0 0 14 13"><path d="M2.2 1.9L11.8 11.1M11.8 1.9L2.2 11.1" stroke="#f5454b" stroke-width="3.3" stroke-linecap="round"/><path d="M2.6 2.3L11.4 10.7M11.4 2.3L2.6 10.7" stroke="#fb7a7f" stroke-width="1" stroke-linecap="round"/></svg>
<div class="cell num" style="left:17px;top:836px;width:39px;background:#c9d7f5">22</div>
<div class="cell" style="left:57px;top:836px;width:242px;background:#eaf0fd">Durchschnitt 1</div>
<div class="cell" style="left:300px;top:836px;width:296px;background:#eaf0fd;letter-spacing:-0.1px">Lob / Preis</div>
<div class="cell" style="left:597px;top:836px;width:137px;background:#c9d7f5;letter-spacing:0.2px"></div>
<div class="cell" style="left:735px;top:836px;width:44px;background:#c9d7f5"></div>
<div class="cell" style="left:780px;top:836px;width:44px;background:#c9d7f5"></div>
<div class="cell" style="left:825px;top:836px;width:44px;background:#c9d7f5"></div>
<div class="cell" style="left:870px;top:836px;width:44px;background:#c9d7f5"></div>
<div class="cell" style="left:915px;top:836px;width:452px;background:#eaf0fd">Durchschnitt 1</div>
<div class="cell" style="left:1368px;top:836px;width:71px;background:#c9d7f5;padding-left:1px"></div>
<div class="cell" style="left:1440px;top:836px;width:71px;background:#c9d7f5;padding-left:1px"></div>
<div class="cell" style="left:1512px;top:836px;width:56px;background:#c9d7f5;padding-left:1px"></div>
<div class="hl" style="left:17px;top:853px;width:1572px"></div>
<div class="db" style="left:1569px;top:836px"></div><svg class="a" style="left:1572px;top:838px" width="14" height="13" viewBox="0 0 14 13"><path d="M2.2 1.9L11.8 11.1M11.8 1.9L2.2 11.1" stroke="#f5454b" stroke-width="3.3" stroke-linecap="round"/><path d="M2.6 2.3L11.4 10.7M11.4 2.3L2.6 10.7" stroke="#fb7a7f" stroke-width="1" stroke-linecap="round"/></svg>
<div class="cell" style="left:17px;top:854px;width:39px;background:#e8e8f2"></div>
<div class="cell" style="left:57px;top:854px;width:242px;background:#e8e8f2"></div>
<div class="cell" style="left:300px;top:854px;width:296px;background:#e8e8f2"></div>
<div class="cell" style="left:597px;top:854px;width:137px;background:#e8e8f2;letter-spacing:0.2px"></div>
<div class="cell" style="left:735px;top:854px;width:44px;background:#e8e8f2"></div>
<div class="cell" style="left:780px;top:854px;width:44px;background:#e8e8f2"></div>
<div class="cell" style="left:825px;top:854px;width:44px;background:#e8e8f2"></div>
<div class="cell" style="left:870px;top:854px;width:44px;background:#e8e8f2"></div>
<div class="cell" style="left:915px;top:854px;width:452px;background:#e8e8f2"></div>
<div class="cell" style="left:1368px;top:854px;width:71px;background:#e8e8f2;padding-left:1px"></div>
<div class="cell" style="left:1440px;top:854px;width:71px;background:#e8e8f2;padding-left:1px"></div>
<div class="cell" style="left:1512px;top:854px;width:56px;background:#e8e8f2;padding-left:1px"></div>
<div class="hl" style="left:17px;top:871px;width:1572px"></div>
<div class="db g" style="left:1569px;top:854px"></div><svg class="a" style="left:1572px;top:856px" width="14" height="13" viewBox="0 0 14 13"><path d="M2.2 1.9L11.8 11.1M11.8 1.9L2.2 11.1" stroke="#959595" stroke-width="3.3" stroke-linecap="round"/></svg>
<div class="vl" style="left:56px;top:458px;height:414px"></div>
<div class="vl" style="left:299px;top:458px;height:414px"></div>
<div class="vl" style="left:596px;top:458px;height:414px"></div>
<div class="vl" style="left:734px;top:458px;height:414px"></div>
<div class="vl" style="left:779px;top:458px;height:414px"></div>
<div class="vl" style="left:824px;top:458px;height:414px"></div>
<div class="vl" style="left:869px;top:458px;height:414px"></div>
<div class="vl" style="left:914px;top:458px;height:414px"></div>
<div class="vl" style="left:1367px;top:458px;height:414px"></div>
<div class="vl" style="left:1439px;top:458px;height:414px"></div>
<div class="vl" style="left:1511px;top:458px;height:414px"></div>
<div class="vl" style="left:1568px;top:458px;height:414px"></div>
<div class="vl" style="left:1588px;top:458px;height:414px"></div>
</body></html>
